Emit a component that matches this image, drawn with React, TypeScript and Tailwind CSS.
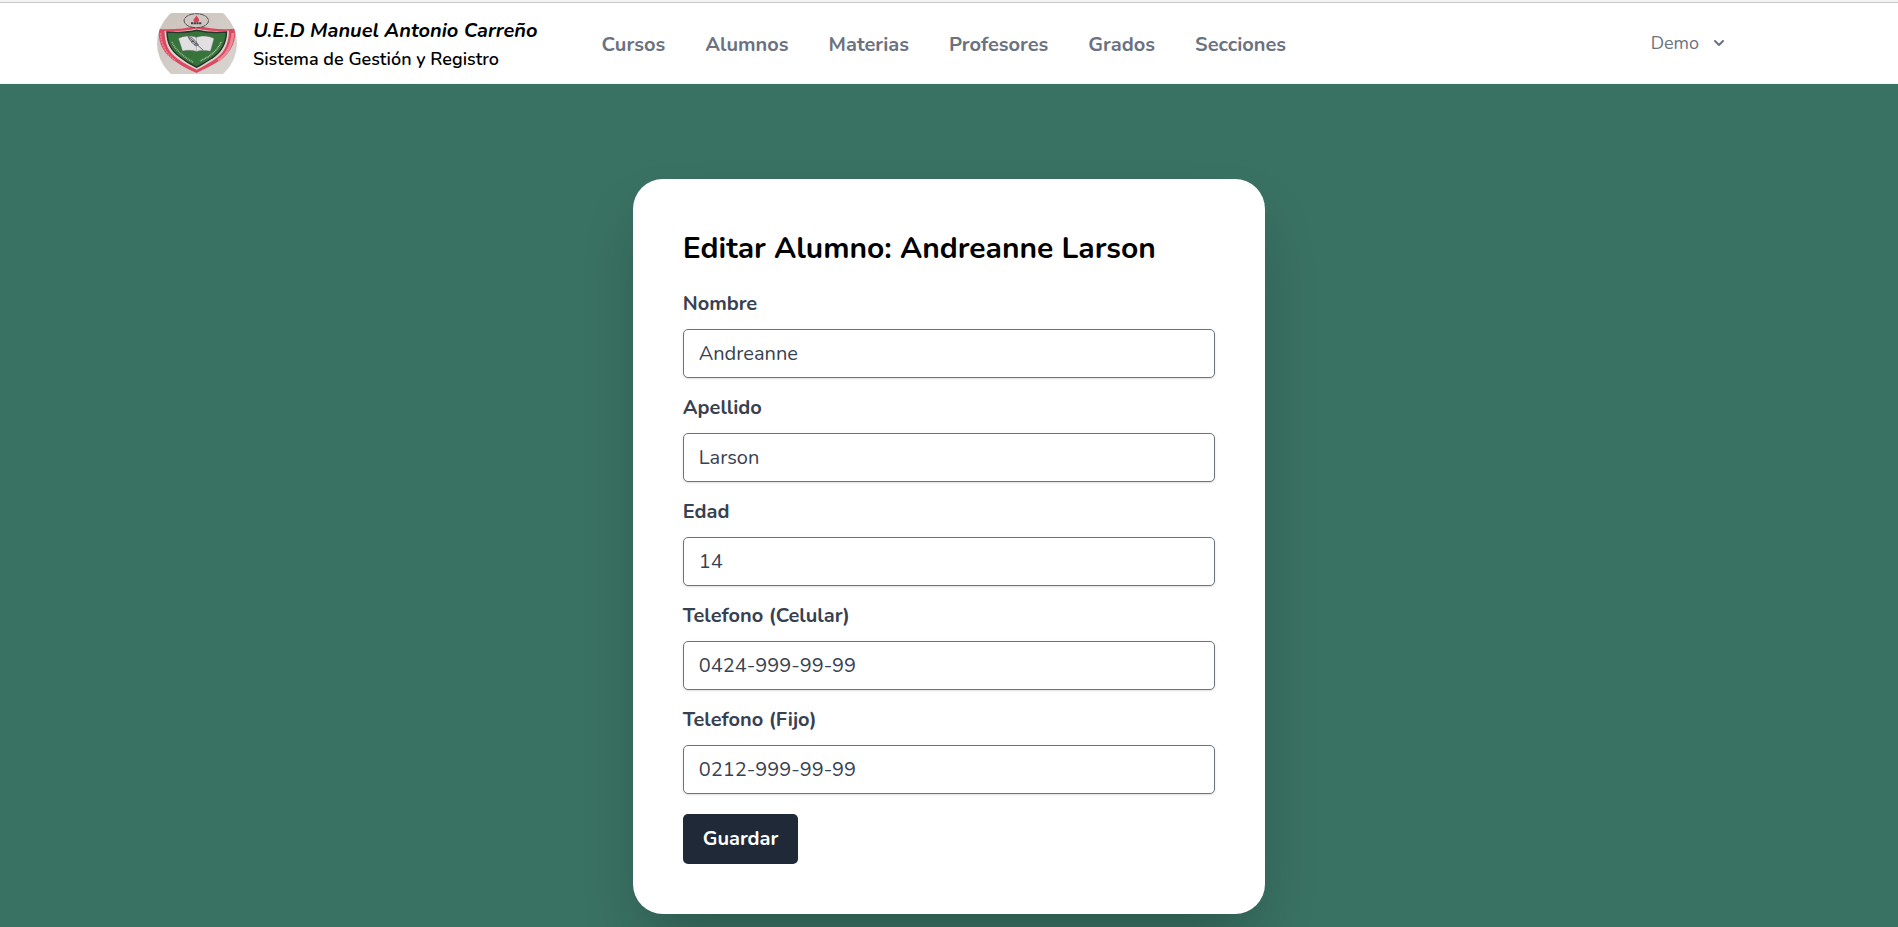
import { useState } from "react";

const links = ["Cursos", "Alumnos", "Materias", "Profesores", "Grados", "Secciones"];

const fields = [
  { id: "nombre", label: "Nombre", value: "Andreanne" },
  { id: "apellido", label: "Apellido", value: "Larson" },
  { id: "edad", label: "Edad", value: "14" },
  { id: "celular", label: "Telefono (Celular)", value: "0424-999-99-99" },
  { id: "fijo", label: "Telefono (Fijo)", value: "0212-999-99-99" },
];

function SchoolCrest() {
  return (
    <svg viewBox="0 0 80 61" className="h-[61px] w-20 shrink-0" role="img" aria-label="Escudo del colegio">
      <defs>
        <clipPath id="crest-clip">
          <circle cx="40" cy="30.5" r="40" />
        </clipPath>
        <linearGradient id="crest-cloth" x1="0" y1="0" x2="1" y2="1">
          <stop offset="0" stopColor="#cbc3bc" />
          <stop offset="1" stopColor="#d9d4d0" />
        </linearGradient>
      </defs>
      <g clipPath="url(#crest-clip)">
        <rect width="80" height="61" fill="url(#crest-cloth)" />
        <path
          d="M1.5 16C15 16.8 29 15.6 39.7 12.4C51 15.6 65 16.8 78.5 15.8C79 33 71 43 58 50.5C51 54.5 45 57 39.7 60C33 57 25 53.500 18.500 48.500C6 40 1.500 31 1.500 16Z"
          fill="#dc4a62"
        />
        <path d="M3.5 20C4 32 9 41 18 47.500" fill="none" stroke="#e8798a" strokeWidth="2" strokeDasharray="2 0.8" />
        <path d="M76 20C75 32 70 42 61 47.500" fill="none" stroke="#e68895" strokeWidth="3" />
        <path
          d="M7.500 18C20 18.700 31 17.800 39.700 15.500C49 17.800 60 18.700 72 17.800C71.500 33 66.500 41 56 47.500C50 51 45 54 39.700 56.800C34 54 27 50.500 21 46C11 39 8 31 7.500 18Z"
          fill="#ddd3cc"
        />
        <path
          d="M10 19C21 19.800 31 19.500 39.700 17.200C49 19.500 59 19.800 69.500 19C69 32 63.500 39.500 55 45C49.500 49 44 51.500 39.700 54.200C35 52 28.500 48.500 23 44C13.500 37 10.300 30 10 19Z"
          fill="#37743c"
          stroke="#27352a"
          strokeWidth="1.5"
        />
        <path d="M15 29C18 36 25 43 36 49" fill="none" stroke="#a9c39b" strokeWidth="1.5" strokeDasharray="0.9 0.9" />
        <path d="M64 29C61 37 54 43 43 48" fill="none" stroke="#b9cda9" strokeWidth="1.5" strokeDasharray="0.9 0.7" />
        <path
          d="M21.500 25.500C26 22.500 35 22.200 39.300 24.500C44 22.200 52 22.500 57 25.500L53.500 38.200C48 37 43 37.200 39.600 38.400C35 37 30 37 25.500 38Z"
          fill="#e2dfe2"
          stroke="#6c7873"
          strokeWidth="0.5"
        />
        <path d="M39.300 25V38" stroke="#8a8a8a" strokeWidth="0.5" />
        <path d="M31 23.500C34 23 39 28 41.500 32L39 33C35 30 32 27 31 23.500Z" fill="#b9b8bb" stroke="#3c4043" strokeWidth="0.6" />
        <path d="M32 24.500L46 37M34 29L37 28M37 32L40 30" stroke="#34383b" strokeWidth="0.7" fill="none" />
        <ellipse cx="39.300" cy="7.700" rx="12.200" ry="7" fill="#cfc7c2" stroke="#41403f" strokeWidth="0.9" strokeDasharray="5 0.5" />
        <path d="M39.500 2.200C40 4 42.500 5.500 42 8C41.500 9.500 37 9.500 36.600 8C36 5.800 39 4.500 39.500 2.200Z" fill="#d93f52" />
        <path d="M34 10.300H44.800" stroke="#49393b" strokeWidth="2" strokeDasharray="2.2 0.5" />
      </g>
    </svg>
  );
}

export default function App() {
  const [values, setValues] = useState<Record<string, string>>(
    Object.fromEntries(fields.map((f) => [f.id, f.value])),
  );

  return (
    <div className="flex min-h-screen flex-col bg-[#397162] font-['Nunito','Open_Sans',sans-serif]">
      <header className="border-t-2 border-b border-t-[#f3f4f6] border-b-[#f3f4f6] bg-white">
        <div className="border-t border-[#c9c9c9]">
          <div className="mx-auto flex h-20 max-w-[1600px] items-center px-2">
            <SchoolCrest />
            <div className="ml-4 pt-[3px] text-black">
              <p className="text-[20px] leading-7 font-bold italic">U.E.D Manuel Antonio Carreño</p>
              <p className="text-[18px] leading-7 font-semibold">Sistema de Gestión y Registro</p>
            </div>
            <nav className="ml-16 flex gap-10 pt-[3px]">
              {links.map((link) => (
                <a key={link} href="#" className="text-[20px] leading-[30px] font-bold text-[#6b7280]">
                  {link}
                </a>
              ))}
            </nav>
            <button type="button" className="mr-3 ml-auto flex items-center gap-2.5 text-[18px] leading-[25px] text-[#6b7280]">
              Demo
              <svg viewBox="0 0 20 20" className="size-5 fill-current" aria-hidden="true">
                <path
                  fillRule="evenodd"
                  clipRule="evenodd"
                  d="M5.293 7.293a1 1 0 011.414 0L10 10.586l3.293-3.293a1 1 0 111.414 1.414l-4 4a1 1 0 01-1.414 0l-4-4a1 1 0 010-1.414z"
                />
              </svg>
            </button>
          </div>
        </div>
      </header>

      <main className="flex flex-1 flex-col items-center pt-[95px]">
        <form
          onSubmit={(e) => e.preventDefault()}
          className="w-1/3 min-w-80 rounded-[30px] bg-white p-[50px] shadow-[0_31px_62px_-15px_rgba(0,0,0,0.25)]"
        >
          <h1 className="mb-5 text-[30px] leading-10 font-bold text-black">Editar Alumno: Andreanne Larson</h1>
          <div className="flex flex-col gap-[15px]">
            {fields.map((field) => (
              <div key={field.id} className="flex flex-col gap-2.5">
                <label htmlFor={field.id} className="text-[20px] leading-[30px] font-bold text-[#374151]">
                  {field.label}
                </label>
                <input
                  id={field.id}
                  type="text"
                  value={values[field.id]}
                  onChange={(e) => setValues({ ...values, [field.id]: e.target.value })}
                  className="h-[49px] w-full rounded-[5px] border border-[#6b7280] bg-white px-[15px] text-[20px] leading-[25px] text-[#374151] shadow-sm"
                />
              </div>
            ))}
          </div>
          <button
            type="submit"
            className="mt-5 block rounded-[5px] bg-[#1f2937] px-5 py-2.5 text-[20px] leading-[30px] font-bold text-white"
          >
            Guardar
          </button>
        </form>
      </main>
    </div>
  );
}
